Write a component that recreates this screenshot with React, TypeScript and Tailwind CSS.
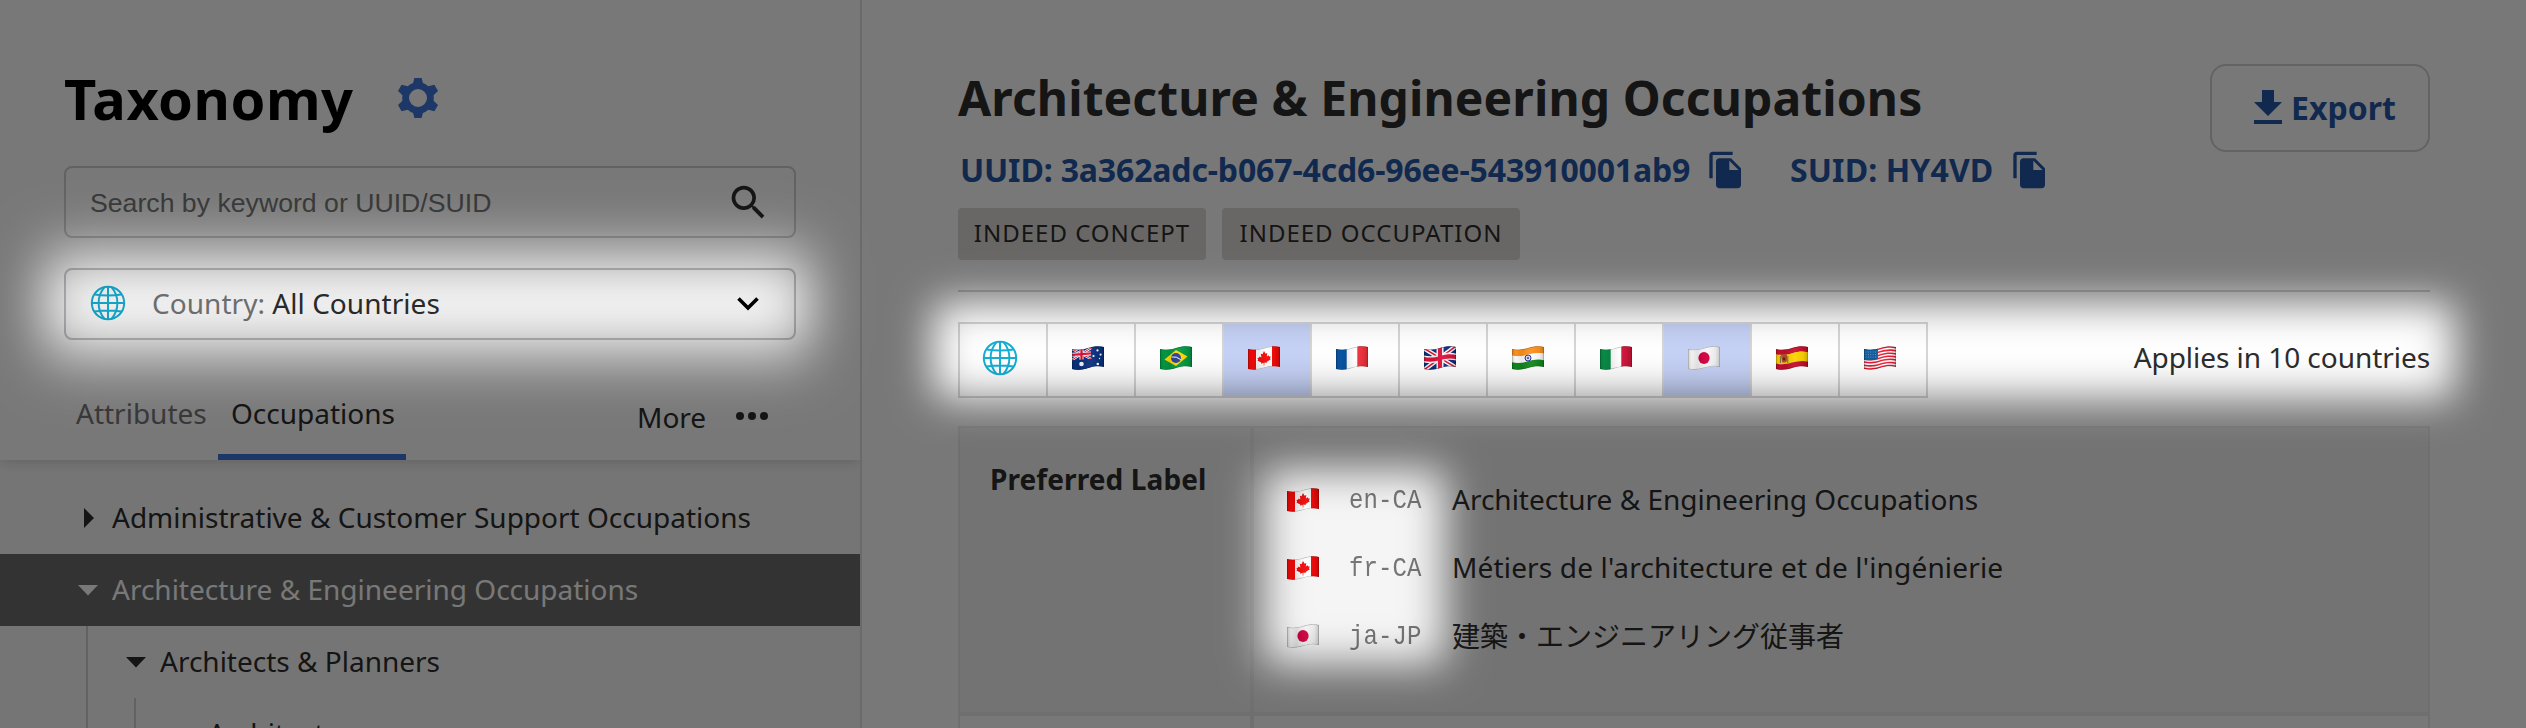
import React from "react";
import { MdFileCopy, MdSearch } from "react-icons/md";

type Code = "au" | "br" | "ca" | "fr" | "gb" | "in" | "it" | "jp" | "es" | "us";

/* Horizontal band that follows the flag's wave, from height a to height b (0..20). */
const band = (a: number, b: number) =>
  `M0 ${a + 3} C6 ${a + 4.4} 11 ${a + 3.6} 16 ${a + 2} C21 ${a + 0.4} 27 ${a - 0.4} 32 ${a + 1} V${b + 1} C27 ${b - 0.4} 21 ${b + 0.4} 16 ${b + 2} C11 ${b + 3.6} 6 ${b + 4.4} 0 ${b + 3} Z`;

function Art({ code }: { code: Code }) {
  switch (code) {
    case "au":
      return (
        <>
          <rect width="32" height="24" fill="#0b3280" />
          <path d="M0 3 L19 13 M19 2 L0 14" stroke="#fff" strokeWidth="2.4" />
          <path d="M0 3 L19 13 M19 2 L0 14" stroke="#e0143c" strokeWidth="1" />
          <path d="M9.5 2V14 M0 8.8 L19 7.4" stroke="#fff" strokeWidth="4" />
          <path d="M9.5 2V14 M0 8.8 L19 7.4" stroke="#e0143c" strokeWidth="2.2" />
          <path d="M0 14.3 L19 13 V24 H0 Z" fill="#0b3280" />
          <circle cx="9.5" cy="18" r="2.3" fill="#fff" />
          <g fill="#fff">
            <circle cx="25.5" cy="4.4" r="1.1" />
            <circle cx="21.5" cy="10" r="1.1" />
            <circle cx="28.6" cy="8.6" r="1.1" />
            <circle cx="25.8" cy="18" r="1.3" />
            <circle cx="27.5" cy="12.5" r=".7" />
          </g>
        </>
      );
    case "br":
      return (
        <>
          <rect width="32" height="24" fill="#059a45" />
          <path d="M16 4 L27.5 10.5 L16 20 L4.5 13.5 Z" fill="#fedd00" />
          <circle cx="16" cy="12" r="5" fill="#2b3f9c" />
          <path d="M11.3 11 Q16.5 10 20.7 13.6" stroke="#fff" strokeWidth="1" fill="none" />
        </>
      );
    case "ca":
      return (
        <>
          <rect width="32" height="24" fill="#fff" />
          <path d="M0 0H8V24H0Z M24 0H32V24H24Z" fill="#f60a0a" />
          <path
            d="M16 5 L17.6 7.8 L19.3 7 L18.8 10.6 L20.7 9.2 L21.2 10.6 L22.8 10.4 L22 12.4 L22.8 13.2 L18.6 16 L18.8 17 L16.4 16.5 L16.3 19.5 H15.7 L15.7 16.8 L13 17.7 L13.3 16.6 L9.4 14.6 L10.2 13.8 L9.4 12 L11 11.8 L11.4 10.4 L13.4 11.4 L12.8 7.8 L14.5 8.2 Z"
            fill="#f60a0a"
          />
        </>
      );
    case "fr":
      return (
        <>
          <rect width="32" height="24" fill="#fff" />
          <path d="M0 0H10.7V24H0Z" fill="#0a57a8" />
          <path d="M21.3 0H32V24H21.3Z" fill="#f4333d" />
        </>
      );
    case "it":
      return (
        <>
          <rect width="32" height="24" fill="#fff" />
          <path d="M0 0H10.7V24H0Z" fill="#0a8f48" />
          <path d="M21.3 0H32V24H21.3Z" fill="#d2153a" />
        </>
      );
    case "gb":
      return (
        <>
          <rect width="32" height="24" fill="#0b3280" />
          <path d="M0 2.5 L32 21.5 M32 0 L0 24" stroke="#fff" strokeWidth="4.4" />
          <path d="M0 2.5 L32 21.5 M32 0 L0 24" stroke="#e0143c" strokeWidth="1.5" />
          <path d="M16 0V24" stroke="#fff" strokeWidth="7" />
          <path d={band(6.5, 13.5)} fill="#fff" />
          <path d="M16 0V24" stroke="#e0143c" strokeWidth="4.2" />
          <path d={band(7.9, 12.1)} fill="#e0143c" />
        </>
      );
    case "in":
      return (
        <>
          <path d={band(-2, 6.8)} fill="#ff9320" />
          <path d={band(6.6, 13.4)} fill="#fff" />
          <path d={band(13.3, 22)} fill="#128a1e" />
          <circle cx="16" cy="12" r="3" fill="#d8d8f5" stroke="#2a2a9c" strokeWidth="1" />
          <circle cx="16" cy="12" r=".9" fill="#2a2a9c" />
        </>
      );
    case "jp":
      return (
        <>
          <rect width="32" height="24" fill="#f8f8f8" />
          <ellipse cx="16" cy="12" rx="5.6" ry="6" fill="#d4003f" />
        </>
      );
    case "es":
      return (
        <>
          <path d={band(-2, 5.4)} fill="#c8102e" />
          <path d={band(5.2, 14.8)} fill="#ffd400" />
          <path d={band(14.6, 22)} fill="#c8102e" />
          <path d="M5 9.5 L6.5 8 L9 8.6 L11 8.6 V15 Q8.5 17.5 6 16 Z" fill="#b5562a" />
          <path d="M4.4 10V17 M11.8 10V17" stroke="#7d6a55" strokeWidth="1" />
          <circle cx="8" cy="13" r="1.4" fill="#7a1530" />
        </>
      );
    case "us":
      return (
        <>
          <rect width="32" height="24" fill="#fff" />
          {[0, 2, 4, 6, 8, 10, 12].map((i) => (
            <path key={i} d={band((i * 20) / 13, ((i + 1) * 20) / 13)} fill="#ee1c35" />
          ))}
          <path d="M0 0H14V12.9 C9 14.2 5 14.8 0 13.8Z" fill="#1463a8" />
          <path d="M1.5 6H13 M1.5 8.5H13 M1.5 11H13" stroke="#9cc4e6" strokeWidth=".6" strokeDasharray="1 1.4" />
        </>
      );
  }
}

function Flag({ code, id }: { code: Code; id: string }) {
  return (
    <svg viewBox="0 0 32 24" className="block h-6 w-8 shrink-0">
      <defs>
        <clipPath id={`${id}-c`}>
          <path d={band(0, 20)} />
        </clipPath>
        <linearGradient id={`${id}-g`} x1="0" x2="1" y1="0" y2="0">
          <stop offset="0" stopColor="#000" stopOpacity=".14" />
          <stop offset=".12" stopColor="#000" stopOpacity=".02" />
          <stop offset=".3" stopColor="#000" stopOpacity=".08" />
          <stop offset=".6" stopColor="#fff" stopOpacity=".05" />
          <stop offset=".85" stopColor="#000" stopOpacity=".05" />
          <stop offset="1" stopColor="#000" stopOpacity=".2" />
        </linearGradient>
      </defs>
      <g clipPath={`url(#${id}-c)`}>
        <Art code={code} />
        <rect width="32" height="24" fill={`url(#${id}-g)`} />
        <path d={band(0, 20)} fill="none" stroke="#000" strokeOpacity=".28" strokeWidth="1.2" />
      </g>
    </svg>
  );
}

function Globe() {
  return (
    <svg viewBox="0 0 36 36" className="block size-9" fill="none" stroke="#16afd6" strokeWidth="2">
      <circle cx="18" cy="18" r="16.2" />
      <path d="M14.5 2.2Q8.6 9 8.6 18T14.5 33.8 M21.5 2.2Q27.4 9 27.4 18T21.5 33.8" />
      <path d="M18 2V34 M2 18H34 M4.5 9.5Q18 11.5 31.5 9.5 M4.5 26.5Q18 24.5 31.5 26.5" />
    </svg>
  );
}

function Gear() {
  return (
    <svg viewBox="0 0 40 40" className="block size-10" fill="#3e75d8">
      <path
        fillRule="evenodd"
        d="M16.4 0H23.6L24.9 5Q27.8 6 30.2 8.2L36.4 6.8L40 13L35.6 17.2Q36 20 35.6 22.8L40 27L36.4 33.2L30.2 31.8Q27.8 34 24.9 35L23.6 40H16.4L15.1 35Q12.2 34 9.8 31.8L3.6 33.2L0 27L4.4 22.8Q4 20 4.4 17.2L0 13L3.6 6.8L9.8 8.2Q12.2 6 15.1 5Z M20 11A9 9 0 1 0 20 29A9 9 0 1 0 20 11Z"
      />
    </svg>
  );
}

const countries: Code[] = ["au", "br", "ca", "fr", "gb", "in", "it", "jp", "es", "us"];

const labels: { code: Code; locale: string; text: string }[] = [
  { code: "ca", locale: "en-CA", text: "Architecture & Engineering Occupations" },
  { code: "ca", locale: "fr-CA", text: "Métiers de l'architecture et de l'ingénierie" },
  { code: "jp", locale: "ja-JP", text: "建築・エンジニアリング従事者" },
];

function Caret({ open, light }: { open?: boolean; light?: boolean }) {
  return (
    <svg viewBox="0 0 20 20" className="block size-5 shrink-0" fill={light ? "#fff" : "#2d2d2d"}>
      <path d={open ? "M0 5H20L10 15.5Z" : "M6 0V20L16 10Z"} />
    </svg>
  );
}

function Sidebar() {
  return (
    <aside className="flex w-[862px] shrink-0 flex-col border-r-2 border-[#e2e2e2] bg-[#f9f9f9]">
      <header className="relative z-10 h-[460px] shrink-0 bg-white shadow-[0_2px_12px_rgba(0,0,0,0.16)] [clip-path:inset(0_0_-24px_0)]">
        <div className="flex h-[166px] items-start pl-16 pt-[60px]">
          <h1 className="w-[334px] text-[56px] leading-[76px] font-bold tracking-[0.5px] text-black">Taxonomy</h1>
          <div className="pt-[18px]">
            <Gear />
          </div>
        </div>
        <div className="mx-16 flex h-[72px] w-[732px] items-center justify-between rounded-lg border-2 border-[#d0d1d4] pr-[23px] pl-6">
          <span className="pt-[2px] font-['Liberation_Sans',sans-serif] text-[26.67px] text-[#767676]">Search by keyword or UUID/SUID</span>
          <MdSearch className="size-[45px] text-[#2d2d2d]" />
        </div>
        <div className="mx-16 mt-[30px] flex h-[72px] w-[732px] items-center rounded-lg border-2 border-[#c4c6cb] pr-[35px] pl-6">
          <div className="pb-[3px]">
            <Globe />
          </div>
          <span className="ml-[26px] flex-1 pb-[2px] text-[28px] tracking-[0.04px] text-[#2d2d2d]">
            <span className="text-[#767676]">Country:</span> All Countries
          </span>
          <svg viewBox="0 0 22 14" className="h-[14px] w-[22px]" fill="none" stroke="#000" strokeWidth="3.6">
            <path d="M1.5 1.5L11 11L20.5 1.5" />
          </svg>
        </div>
        <nav className="flex h-[120px] items-stretch pl-[76px] text-[28px]">
          <span className="w-[142px] pt-[53px] leading-[40px] text-[#767676]">Attributes</span>
          <span className="w-[188px] border-b-[6px] border-[#3e75d8] pt-[53px] pl-[13px] leading-[40px] text-[#2d2d2d]">Occupations</span>
          <span className="ml-[231px] w-[99px] pt-[57px] leading-[40px] text-[#2d2d2d]">More</span>
          <span className="flex gap-[4px] pt-[72px]">
            <i className="size-2 rounded-full bg-[#2d2d2d]" />
            <i className="size-2 rounded-full bg-[#2d2d2d]" />
            <i className="size-2 rounded-full bg-[#2d2d2d]" />
          </span>
        </nav>
      </header>
      <div className="flex h-[268px] flex-col overflow-hidden pt-[22px] text-[28px] text-[#2d2d2d]">
        <div className="flex h-[72px] shrink-0 items-center gap-[14px] pl-[78px]">
          <Caret />
          <span className="pb-[2px]">Administrative &amp; Customer Support Occupations</span>
        </div>
        <div className="flex h-[72px] shrink-0 items-center gap-[14px] bg-[#6d6d6d] pl-[78px] text-white">
          <Caret open light />
          <span className="pb-[2px]">Architecture &amp; Engineering Occupations</span>
        </div>
        <div className="ml-[86px] border-l-2 border-[#d0d0d0]">
          <div className="flex h-[72px] items-center gap-[14px] pl-[38px]">
            <Caret open />
            <span className="pb-[2px]">Architects &amp; Planners</span>
          </div>
          <div className="ml-[46px] flex h-[72px] items-center border-l-2 border-[#d0d0d0] pb-[2px] pl-[72px]">Architects</div>
        </div>
      </div>
    </aside>
  );
}

function Main() {
  return (
    <main className="w-[1568px] shrink-0 pl-24">
      <div className="flex h-[208px] justify-between">
        <div>
          <h2 className="pt-[65px] text-[48px] leading-[66px] font-bold tracking-[0.12px] text-[#2d2d2d]">
            Architecture &amp; Engineering Occupations
          </h2>
          <div className="flex items-center pt-[17px] pl-[2px] text-[32px] leading-[44px] font-bold text-[#2557a7]">
            <span className="w-[746px] tracking-[-0.15px]">UUID: 3a362adc-b067-4cd6-96ee-543910001ab9</span>
            <MdFileCopy className="size-[40px]" />
            <span className="ml-[44px] w-[220px] tracking-[0.12px]">SUID: HY4VD</span>
            <MdFileCopy className="size-[40px]" />
          </div>
        </div>
        <div className="mt-16 flex h-[88px] w-[220px] items-center rounded-2xl border-2 border-[#d4d2d0] pl-[42px] text-[32px] font-bold text-[#2557a7]">
          <svg viewBox="0 0 28 34" className="mr-[9px] mb-[2px] h-[34px] w-[28px]" fill="currentColor">
            <path d="M8 0H20V12H28L14 26L0 12H8Z M0 30H28V34H0Z" />
          </svg>
          Export
        </div>
      </div>
      <div className="flex h-[52px] gap-4 text-[24px] tracking-[1px] text-[#2d2d2d]">
        <span className="flex w-[248px] items-center justify-center rounded bg-[#dedcd7] pb-[2px]">INDEED CONCEPT</span>
        <span className="flex w-[298px] items-center justify-center rounded bg-[#dedcd7] pb-[2px]">INDEED OCCUPATION</span>
      </div>
      <div className="mt-[30px] h-[2px] bg-[#d4d4d4]" />
      <div className="mt-[30px] flex items-center justify-between">
        <div className="flex h-[76px] border-2 border-r-0 border-[#d6d6d6]">
          <span className="flex w-[88px] items-center justify-center border-r-2 border-[#d6d6d6] pr-[6px] pb-[4px]">
            <Globe />
          </span>
          {countries.map((c) => (
            <span
              key={c}
              className={
                c === "ca" || c === "jp"
                  ? "flex w-[88px] items-center border-r-2 border-[#d6d6d6] bg-[#c5d1f5] pb-[4px] pl-6"
                  : "flex w-[88px] items-center border-r-2 border-[#d6d6d6] pb-[4px] pl-6"
              }
            >
              <Flag code={c} id={`strip-${c}`} />
            </span>
          ))}
        </div>
        <span className="pb-[7px] text-[28px] tracking-[-0.05px] text-[#2d2d2d]">Applies in 10 countries</span>
      </div>
      <div className="mt-7 border-2 border-b-0 border-[#ececec] bg-[#f5f5f5]">
        <div className="flex h-[284px]">
          <div className="w-[294px] border-r-4 border-[#ececec] pt-[31px] pl-[30px] text-[28px] leading-[40px] font-bold tracking-[0.1px] text-[#2d2d2d]">
            Preferred Label
          </div>
          <div className="pt-[38px] pl-[33px]">
            {labels.map((l) => (
              <div key={l.locale} className="flex h-[68px] items-center">
                <Flag code={l.code} id={`label-${l.locale}`} />
                <span className="ml-[30px] w-[103px] origin-[50%_70%] scale-y-112 pt-[3px] font-['Liberation_Mono',monospace] text-[24px] tracking-[0.1px] text-[#767676]">
                  {l.locale}
                </span>
                <span
                  className={
                    l.locale === "fr-CA"
                      ? "pb-[2px] text-[28px] tracking-[0.16px] text-[#2d2d2d]"
                      : l.locale === "ja-JP"
                        ? "text-[28px] text-[#2d2d2d]"
                        : "pb-[2px] text-[28px] text-[#2d2d2d]"
                  }
                >
                  {l.text}
                </span>
              </div>
            ))}
          </div>
        </div>
        <div className="h-1 bg-[#ececec]" />
        <div className="h-3 bg-white">
          <div className="h-3 w-[294px] border-r-4 border-[#ececec]" />
        </div>
      </div>
    </main>
  );
}

/* Dims the page and leaves three soft-edged spotlights. */
function Spotlights() {
  return (
    <svg viewBox="0 0 2526 728" className="pointer-events-none absolute inset-0 z-20 h-[728px] w-[2526px]">
      <defs>
        <filter id="soft-wide" filterUnits="userSpaceOnUse" x="-200" y="0" width="1300" height="728">
          <feGaussianBlur stdDeviation="27 32" />
        </filter>
        <filter id="soft" filterUnits="userSpaceOnUse" x="600" y="0" width="2100" height="900">
          <feGaussianBlur stdDeviation="21" />
        </filter>
        <mask id="holes" maskUnits="userSpaceOnUse" x="0" y="0" width="2526" height="728">
          <rect width="2526" height="728" fill="#fff" />
          <rect x="44" y="258" width="766" height="92" rx="8" fill="#000" filter="url(#soft-wide)" />
          <rect x="934" y="303" width="1520" height="95" rx="8" fill="#000" filter="url(#soft)" />
          <rect x="1264" y="470" width="181" height="194" rx="8" fill="#000" filter="url(#soft)" />
        </mask>
      </defs>
      <rect width="2526" height="728" fill="#000" fillOpacity=".53" mask="url(#holes)" />
    </svg>
  );
}

export default function App() {
  return (
    <div className="relative flex h-[728px] w-[2526px] overflow-hidden bg-white font-['Noto_Sans','Noto_Sans_CJK_JP',sans-serif]">
      <Sidebar />
      <Main />
      <Spotlights />
    </div>
  );
}
